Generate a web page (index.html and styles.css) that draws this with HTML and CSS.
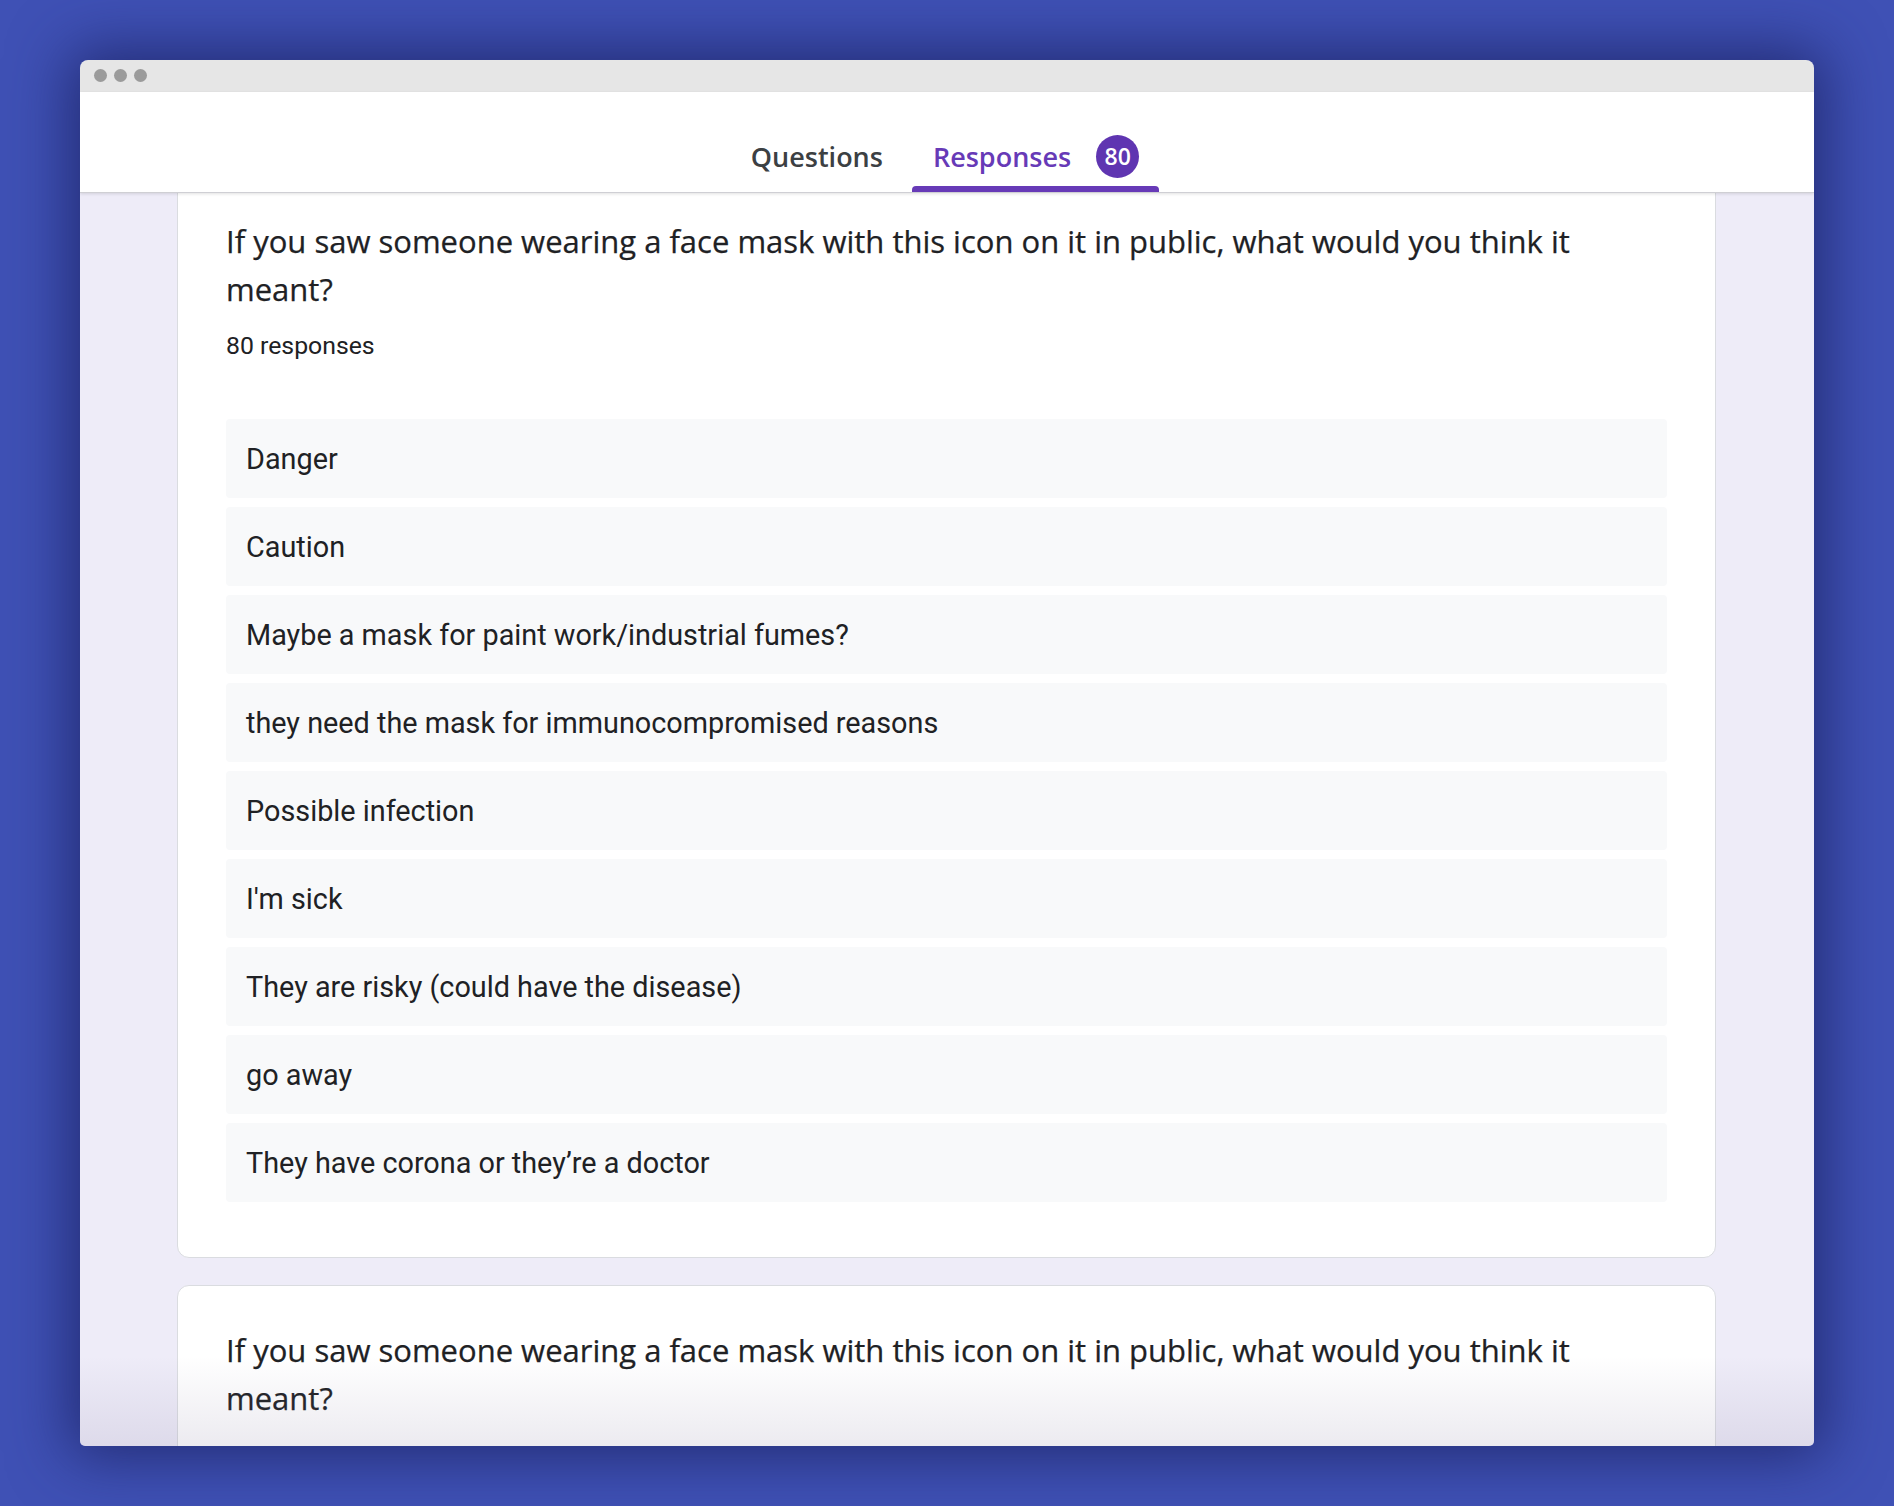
FILE: index.html
```html
<!DOCTYPE html>
<html lang="en">
<head>
<meta charset="utf-8">
<title>Responses</title>
<link rel="stylesheet" href="styles.css">
</head>
<body>
<div class="stage">
  <div class="window">
    <div class="titlebar">
      <span class="dot"></span><span class="dot"></span><span class="dot"></span>
    </div>
    <div class="header">
      <nav class="tabs">
        <div class="tab">Questions</div>
        <div class="tab active">Responses <span class="badge">80</span></div>
      </nav>
    </div>
    <div class="content">
      <section class="card first">
        <h2 class="q-title">If you saw someone wearing a face mask with this icon on it in public, what would you think it meant?</h2>
        <div class="count">80 responses</div>
        <ul class="answers">
          <li>Danger</li>
          <li>Caution</li>
          <li>Maybe a mask for paint work/industrial fumes?</li>
          <li>they need the mask for immunocompromised reasons</li>
          <li>Possible infection</li>
          <li>I'm sick</li>
          <li>They are risky (could have the disease)</li>
          <li>go away</li>
          <li>They have corona or they’re a doctor</li>
        </ul>
      </section>
      <section class="card">
        <h2 class="q-title">If you saw someone wearing a face mask with this icon on it in public, what would you think it meant?</h2>
        <div class="count">80 responses</div>
      </section>
      <div class="fade"></div>
    </div>
  </div>
</div>
</body>
</html>
```

FILE: styles.css
```css
* { box-sizing: border-box; }
html, body { margin: 0; padding: 0; }
body {
  width: 1894px;
  height: 1506px;
  background: #3f51b5;
  overflow: hidden;
  font-family: Roboto, "Liberation Sans", sans-serif;
}
.stage {
  padding: 60px 80px 0 80px;
}
.window {
  position: relative;
  width: 1734px;
  height: 1386px;
  border-radius: 8px 8px 5px 5px;
  overflow: hidden;
  display: flex;
  flex-direction: column;
  box-shadow: 0 0 60px 10px rgba(30, 38, 105, 0.85);
}
.titlebar {
  height: 32px;
  background: #e6e6e6;
  display: flex;
  align-items: center;
  gap: 7px;
  padding-left: 14px;
  padding-bottom: 1px;
}
.dot {
  width: 13px;
  height: 13px;
  border-radius: 50%;
  background: #9b9b9b;
}
.header {
  height: 101px;
  background: #fff;
  border-bottom: 1px solid #cfcfd4;
  box-shadow: 0 1px 3px rgba(0,0,0,0.12);
  display: flex;
  justify-content: center;
  align-items: flex-end;
  position: relative;
  z-index: 2;
  padding-right: 5px;
}
.tabs {
  display: flex;
  gap: 8px;
}
.tab {
  font-family: "Open Sans", sans-serif;
  font-weight: 600;
  font-size: 27px;
  color: #3c4043;
  height: 100px;
  padding: 0 21px 0 21px;
  display: flex;
  align-items: center;
  padding-top: 28px;
  position: relative;
}
.tab.active {
  color: #673ab7;
  padding-right: 20px;
}
.tab.active::after {
  content: "";
  position: absolute;
  left: 0;
  right: 0;
  bottom: 0;
  height: 6px;
  background: #673ab7;
  border-radius: 4px 4px 0 0;
}
.badge {
  margin-left: 25px;
  width: 43px;
  height: 43px;
  border-radius: 50%;
  background: #5f35b1;
  color: #fff;
  font-family: "Open Sans", sans-serif;
  font-weight: 600;
  font-size: 23px;
  display: flex;
  align-items: center;
  justify-content: center;
}
.content {
  flex: 1;
  background: #eeecf8;
  padding: 0 98px 0 97px;
  position: relative;
  overflow: hidden;
}
.card {
  background: #fff;
  border: 1px solid #dadce0;
  border-radius: 12px;
  padding: 40px 48px 55px 48px;
  margin-bottom: 27px;
}
.card.first {
  margin-top: -17px;
}
.q-title {
  margin: 0;
  padding-right: 60px;
  font-family: "Open Sans", sans-serif;
  font-weight: 400;
  font-size: 31px;
  line-height: 48px;
  color: #202124;
  -webkit-text-stroke: 0.25px #202124;
}
.count {
  margin-top: 18px;
  font-size: 24.8px;
  line-height: 30px;
  color: #202124;
}
.answers {
  list-style: none;
  margin: 58px 0 0 0;
  padding: 0;
  display: flex;
  flex-direction: column;
  gap: 9px;
}
.answers li {
  height: 79px;
  background: #f8f9fa;
  border-radius: 4px;
  padding-left: 20px;
  display: flex;
  align-items: center;
  font-size: 28.8px;
  color: #202124;
}
.fade {
  position: absolute;
  left: 0;
  right: 0;
  bottom: 0;
  height: 90px;
  background: linear-gradient(to bottom, rgba(120,110,150,0) 0%, rgba(120,110,150,0.14) 100%);
  pointer-events: none;
}
```
